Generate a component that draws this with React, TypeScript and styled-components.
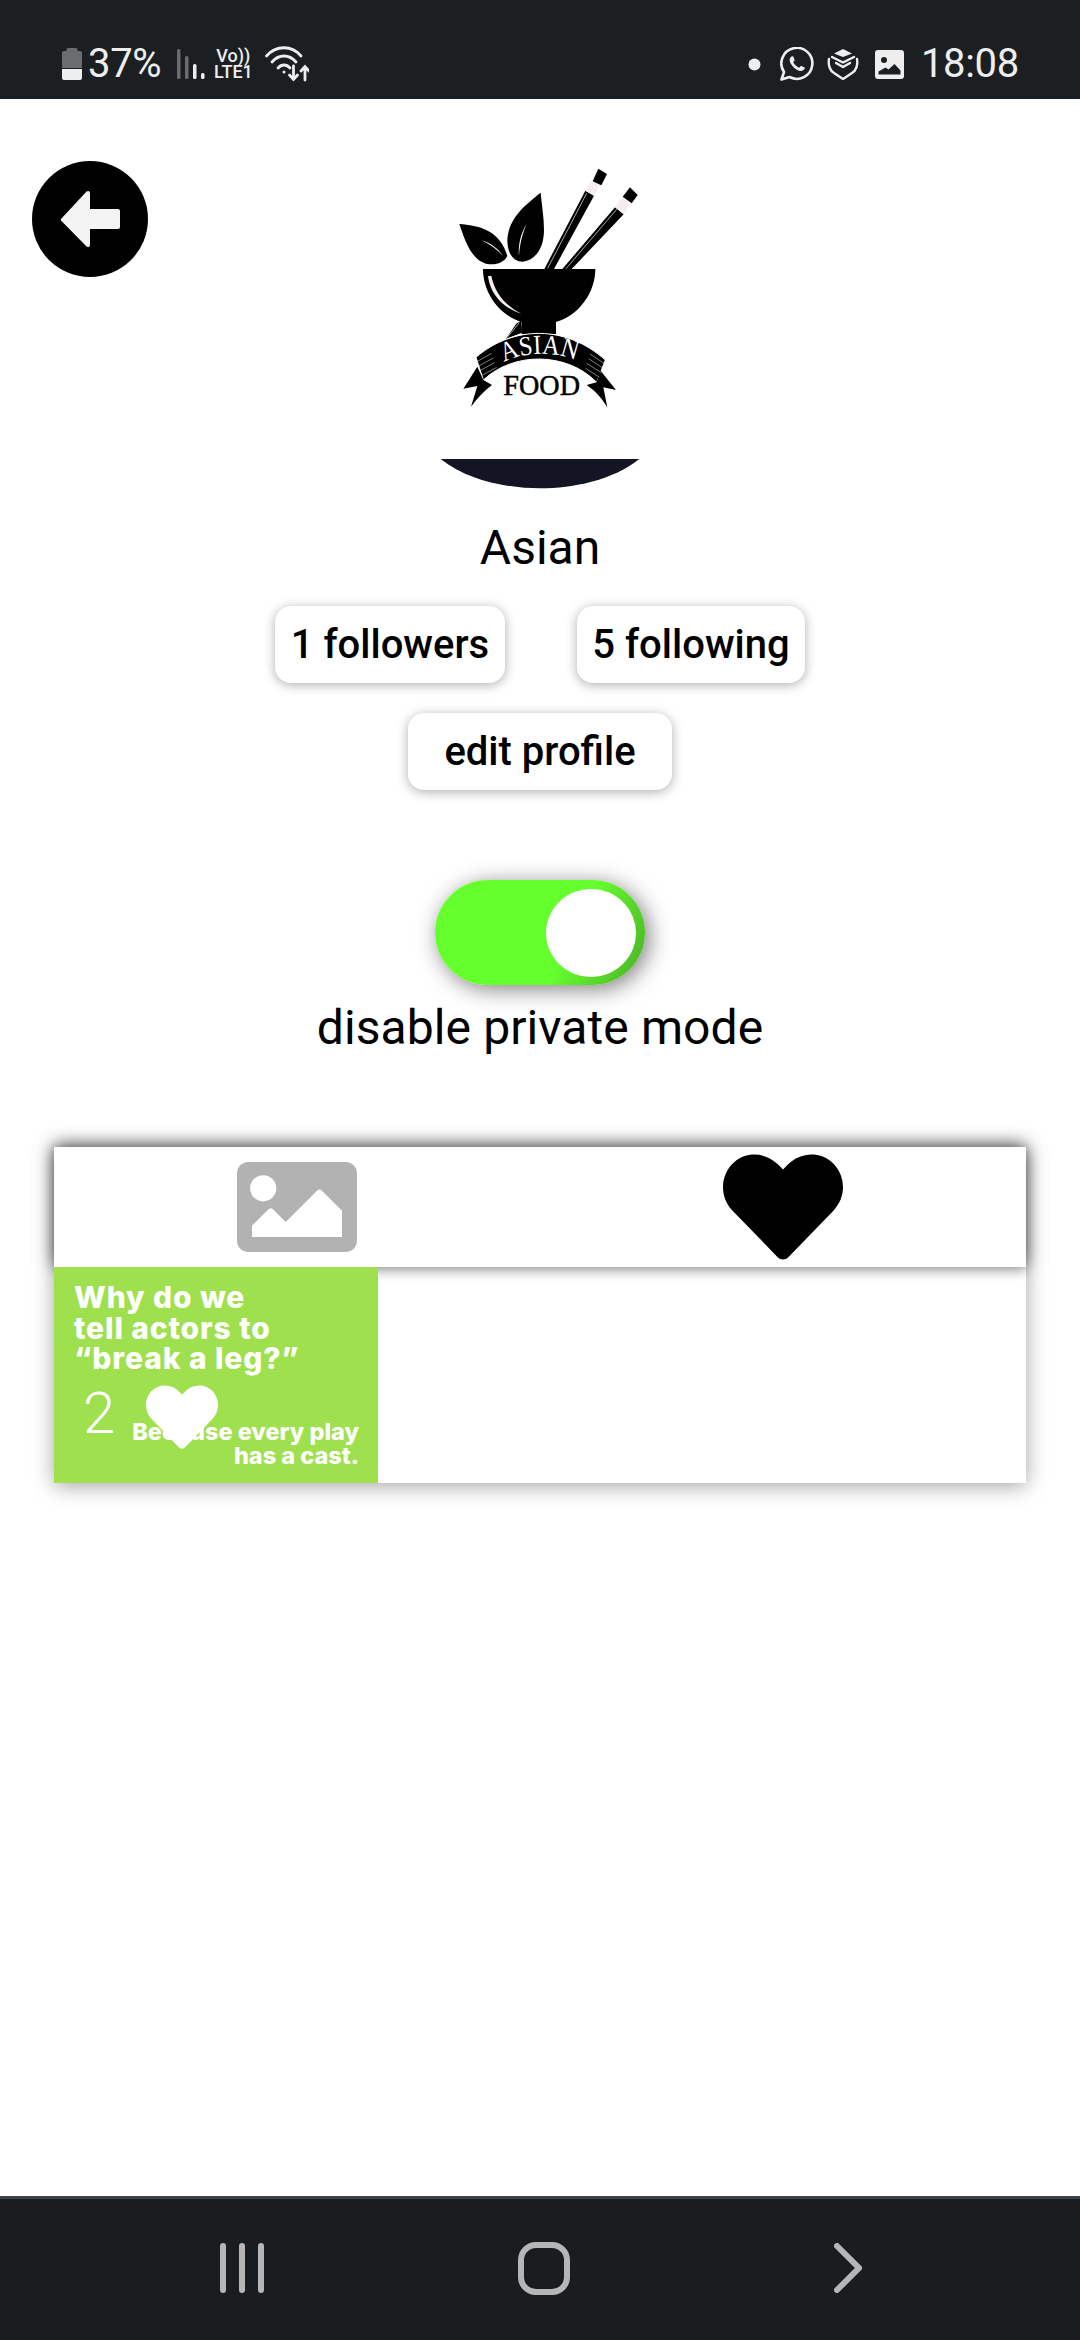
import React from "react";
import styled, { createGlobalStyle } from "styled-components";
import { FaHeart, FaImage } from "react-icons/fa";

const Global = createGlobalStyle`
  html, body { margin: 0; padding: 0; background: #fff; }
  * { box-sizing: border-box; }
`;

const Page = styled.div`
  width: 1080px;
  height: 2340px;
  display: flex;
  flex-direction: column;
  overflow: hidden;
  background: #fff;
  font-family: Roboto, "Liberation Sans", sans-serif;
  color: #000;
`;

const StatusBar = styled.header`
  height: 99px;
  flex: none;
  background: #1b1f22;
  color: #eeeeee;
  display: flex;
  justify-content: space-between;
  align-items: flex-start;
  padding: 42px 61px 0 62px;
`;

const StatusGroup = styled.div<{ $gap: number }>`
  display: flex;
  align-items: center;
  gap: ${(p) => p.$gap}px;
  height: 44px;
`;

const StatusText = styled.span<{ $ml?: number }>`
  font-size: 40px;
  line-height: 44px;
  font-weight: 400;
  letter-spacing: -0.3px;
  margin-left: ${(p) => p.$ml ?? 0}px;
`;

const Network = styled.div`
  display: flex;
  flex-direction: column;
  align-items: center;
  font-size: 18px;
  font-weight: 500;
  line-height: 16px;
  width: 38px;
  margin-left: 9px;
`;

const Main = styled.main`
  flex: 1;
  display: flex;
  flex-direction: column;
  align-items: center;
`;

const Top = styled.div`
  width: 100%;
  display: grid;
  grid-template-columns: 400px 280px 400px;
  padding-top: 51px;
`;

const BackButton = styled.button`
  width: 116px;
  height: 116px;
  border: 0;
  padding: 0;
  margin: 11px 0 0 32px;
  border-radius: 50%;
  background: #000;
  display: flex;
  align-items: center;
  justify-content: center;
`;

const Logo = styled.svg`
  width: 280px;
  height: 340px;
  display: block;
`;

const Name = styled.h1`
  margin: 30px 0 0;
  font-size: 48px;
  line-height: 56px;
  font-weight: 400;
`;

const StatsRow = styled.div`
  display: flex;
  gap: 72px;
  margin-top: 30px;
`;

const Pill = styled.button<{ $w: number }>`
  width: ${(p) => p.$w}px;
  height: 77px;
  border: 0;
  padding: 0;
  border-radius: 16px;
  background: #fff;
  color: #000;
  font-family: inherit;
  font-size: 40px;
  font-weight: 500;
  box-shadow: 0 2px 12px rgba(0, 0, 0, 0.32);
`;

const EditButton = styled(Pill)`
  margin-top: 30px;
`;

const Toggle = styled.div`
  width: 210px;
  height: 105px;
  margin-top: 90px;
  border-radius: 53px;
  background: linear-gradient(115deg, #66ff2e 62%, #4aae27 100%);
  display: flex;
  align-items: center;
  justify-content: flex-end;
  padding-right: 9px;
  box-shadow: 4px 4px 22px rgba(0, 0, 0, 0.5);
`;

const Knob = styled.div`
  width: 90px;
  height: 88px;
  border-radius: 50%;
  background: #fff;
`;

const ToggleLabel = styled.div`
  margin-top: 15px;
  font-size: 48px;
  line-height: 56px;
  letter-spacing: 0.1px;
`;

const Card = styled.section`
  width: 972px;
  height: 336px;
  margin-top: 91px;
  background: #fff;
  box-shadow: 0 3px 20px rgba(0, 0, 0, 0.36);
`;

const Tabs = styled.div`
  position: relative;
  height: 120px;
  display: grid;
  grid-template-columns: 1fr 1fr;
  justify-items: center;
  background: #fff;
  box-shadow: 0 -3px 16px rgba(0, 0, 0, 0.55), 0 4px 10px rgba(0, 0, 0, 0.18);
`;

const Tab = styled.div<{ $color: string }>`
  height: 120px;
  color: ${(p) => p.$color};
  svg { display: block; }
`;

const Tile = styled.article`
  position: relative;
  width: 324px;
  height: 216px;
  background: #9fe04f;
  color: #fff;
  font-family: Inter, "Open Sans", sans-serif;
  font-weight: 800;
  overflow: hidden;
`;

const TileTitle = styled.div`
  position: absolute;
  left: 20px;
  top: 15px;
  font-size: 30px;
  line-height: 30.5px;
  letter-spacing: 0.9px;
  white-space: nowrap;
`;

const TileAnswer = styled.div`
  position: absolute;
  right: 19px;
  bottom: 16px;
  font-size: 23.5px;
  line-height: 23.5px;
  text-align: right;
  white-space: nowrap;
`;

const LikeCount = styled.div`
  position: absolute;
  left: 29px;
  top: 112px;
  font-family: Roboto, sans-serif;
  font-weight: 300;
  font-size: 58px;
  line-height: 68px;
`;

const LikeHeart = styled.div`
  position: absolute;
  left: 92px;
  top: 114px;
  svg { display: block; }
`;

const NavBar = styled.nav`
  height: 144px;
  flex: none;
  background: #191d20;
  border-top: 3px solid #3d4247;
  display: flex;
  align-items: center;
  padding: 0 0 3px 220px;
  gap: 254px;
  color: #b6b6b6;
`;

const Chevron = styled.svg`
  margin-left: 10px;
`;

export default function App() {
  return (
    <Page>
      <Global />
      <StatusBar>
        <StatusGroup $gap={0}>
          <svg width="20" height="32" viewBox="0 0 20 32">
            <path d="M6 0h8a1.5 1.5 0 0 1 1.5 1.5V3H18a2 2 0 0 1 2 2v15H0V5a2 2 0 0 1 2-2h2.500V1.500A1.500 1.500 0 0 1 6 0z" fill="#6b6c6e" />
            <path d="M0 21h20v9a2 2 0 0 1-2 2H2a2 2 0 0 1-2-2z" fill="#eeeeee" />
          </svg>
          <StatusText $ml={6}>37%</StatusText>
          <svg width="28" height="32" viewBox="0 0 28 32" style={{ marginLeft: 16 }}>
            <rect x="0" y="1" width="3.500" height="30" rx="1.500" fill="#6b6c6e" />
            <rect x="8" y="8" width="3.500" height="23" rx="1.500" fill="#6b6c6e" />
            <rect x="16" y="16" width="3.500" height="15" rx="1.500" fill="#eeeeee" />
            <rect x="24" y="25" width="3.500" height="6" rx="1.500" fill="#eeeeee" />
          </svg>
          <Network>
            <span>Vo))</span>
            <span>LTE1</span>
          </Network>
          <svg width="44" height="36" viewBox="0 0 44 36" style={{ marginLeft: 13 }} fill="none" stroke="#eeeeee" strokeWidth="2.800" strokeLinecap="round">
            <path d="M1.500 10C11 -1 27 -1 36 10" />
            <path d="M7 16C14 8 24 8 31 16" />
            <path d="M13 22C16.500 18 21.500 18 25 22" />
            <circle cx="19" cy="26" r="1.500" fill="#eeeeee" stroke="none" />
            <path d="M28.500 20V33M24.500 29L28.500 33.500L32.500 29" />
            <path d="M40 34V21M36 25L40 20.500L44 25" />
          </svg>
        </StatusGroup>
        <StatusGroup $gap={0}>
          <svg width="13" height="13" viewBox="0 0 13 13"><circle cx="6.500" cy="6.500" r="6" fill="#eeeeee" /></svg>
          <svg width="34" height="34" viewBox="0 0 34 34" style={{ marginLeft: 19 }} fill="none">
            <path d="M1.500 32.500L4 25A15.500 15.500 0 1 1 9.500 30z" stroke="#eeeeee" strokeWidth="2.600" strokeLinejoin="round" />
            <path d="M11.500 9.500c-2 1.500-2.500 4 -.5 7.500 2.500 4 6 6.500 9 7 2.500.3 4.500-1 5-3.200l-4-2-1.800 2c-2.500-1-4.700-3-6-5.800l1.600-1.800-1.700-4z" fill="#eeeeee" />
          </svg>
          <svg width="32" height="32" viewBox="0 0 32 32" style={{ marginLeft: 13 }} fill="none" stroke="#eeeeee" strokeWidth="2.400" strokeLinejoin="round" strokeLinecap="round">
            <path d="M16 1L25 5.500L16 9L7 5.500z" fill="#eeeeee" stroke="none" />
            <path d="M5 9L16 14.500L27 9" />
            <path d="M9 15L16 19L23 15" />
            <path d="M2 11C1 17 3 23 7 25L13 29L16 31L19 29L25 25C29 23 31 17 30 11" />
          </svg>
          <svg width="29" height="29" viewBox="0 0 29 29" style={{ marginLeft: 16 }}>
            <path fillRule="evenodd" d="M3 0h23a3 3 0 0 1 3 3v23a3 3 0 0 1-3 3H3a3 3 0 0 1-3-3V3a3 3 0 0 1 3-3zM9 7a3 3 0 1 0 0 6 3 3 0 0 0 0-6zM3.500 24.500h22v-4l-6-6.500-6 5.500-3-2-7 4z" fill="#eeeeee" />
          </svg>
          <StatusText $ml={17}>18:08</StatusText>
        </StatusGroup>
      </StatusBar>

      <Main>
        <Top>
          <div>
            <BackButton aria-label="back">
              <svg width="62" height="62" viewBox="0 0 62 62">
                <path d="M2 31L27.500 3.500Q31 1.500 31 6V21H59Q61 21 61 23V39Q61 41 59 41H31V56Q31 60.500 27.500 58.500L2 32.500Q1.500 31.700 2 31Z" fill="#f4f4f4" />
              </svg>
            </BackButton>
          </div>
          <Logo viewBox="0 0 840 1020">
            <path d="M178 222C235 226 300 240 322 318C312 338 288 346 262 342C215 332 195 272 178 222Z" />
            <path d="M245 271C275 280 295 298 310 318C290 298 270 283 245 271Z" fill="#fff" />
            <path d="M422 128C375 165 325 205 322 270C322 310 340 335 368 335C410 330 432 290 432 240C432 200 425 165 422 128Z" />
            <path d="M380 222C362 250 354 285 357 318C359 285 367 250 380 222Z" fill="#fff" />
            <path d="M433 357L556 122L582 137L462 357Z" />
            <path d="M556 122L582 137L600 104L574 92Z" fill="#f6eeee" />
            <path d="M578 94L604 106L621 72L595 56Z" />
            <path d="M443 355L560 130" stroke="#fff" strokeWidth="2" />
            <path d="M487 357L645 172L671 193L515 357Z" />
            <path d="M645 172L671 193L691 162L664 142Z" fill="#f6eeee" />
            <path d="M668 140L695 160L713 135L690 112Z" />
            <path d="M498 356L650 178" stroke="#fff" strokeWidth="2" />
            <path d="M249 357H586C586 425 540 495 468 516L468 552H365L365 516C295 495 249 425 249 357Z" />
            <path d="M264 378L274 378C284 430 320 470 364 491C310 475 270 432 264 378Z" fill="#f6eeee" />
            <path d="M318 566L350 520L364 512L366 548Z" />
            <path d="M322 562L358 518" stroke="#fff" strokeWidth="2" />
            <path d="M228 622C340 525 500 525 616 630L590 697C500 605 340 605 250 690Z" stroke="#fff" strokeWidth="3" />
            <path d="M232 650L190 716L232 708L213 770C240 735 262 715 276 705L250 690Z" />
            <path d="M600 660L648 720L610 712L622 772C600 735 575 715 560 705L590 697Z" />
            <g stroke="#fff" strokeWidth="1.500">
              <path d="M232 634L275 610M236 648L280 624M240 662L284 638M246 676L290 652" />
              <path d="M612 640L570 612M608 654L566 626M604 668L560 640M598 682L556 654" />
            </g>
            <path id="ribbon" d="M312 637C370 604 470 604 530 632" fill="none" />
            <text fontFamily="Liberation Serif, serif" fontSize="82" fill="#fff">
              <textPath href="#ribbon" startOffset="0" textLength="222" lengthAdjust="spacingAndGlyphs">ASIAN</textPath>
            </text>
            <text x="310" y="735" fontFamily="Liberation Serif, serif" fontSize="86" stroke="#000" strokeWidth="1.500" textLength="230" lengthAdjust="spacingAndGlyphs">FOOD</text>
            <path d="M122 927H718C640 990 520 1015 420 1015C320 1015 200 990 122 927Z" fill="#131524" />
          </Logo>
          <div />
        </Top>

        <Name>Asian</Name>
        <StatsRow>
          <Pill $w={230}>1 followers</Pill>
          <Pill $w={228}>5 following</Pill>
        </StatsRow>
        <EditButton $w={264}>edit profile</EditButton>

        <Toggle>
          <Knob />
        </Toggle>
        <ToggleLabel>disable private mode</ToggleLabel>

        <Card>
          <Tabs>
            <Tab $color="#b3b2b3"><FaImage size={120} /></Tab>
            <Tab $color="#000"><FaHeart size={120} /></Tab>
          </Tabs>
          <Tile>
            <TileTitle>
              Why do we<br />tell actors to<br />“break a leg?”
            </TileTitle>
            <TileAnswer>
              Because every play<br />has a cast.
            </TileAnswer>
            <LikeCount>2</LikeCount>
            <LikeHeart><FaHeart size={72} /></LikeHeart>
          </Tile>
        </Card>
      </Main>

      <NavBar>
        <svg width="44" height="50" viewBox="0 0 44 50" fill="none" stroke="#b6b6b6" strokeWidth="6" strokeLinecap="round">
          <path d="M3 3V47M22 3V47M41 3V47" />
        </svg>
        <svg width="52" height="53" viewBox="0 0 52 53" fill="none" stroke="#b6b6b6" strokeWidth="6">
          <rect x="3" y="3" width="46" height="47" rx="15" />
        </svg>
        <Chevron width="28" height="50" viewBox="0 0 28 50" fill="none" stroke="#b6b6b6" strokeWidth="6" strokeLinecap="round" strokeLinejoin="miter">
          <path d="M3 3L25 25L3 47" />
        </Chevron>
      </NavBar>
    </Page>
  );
}
